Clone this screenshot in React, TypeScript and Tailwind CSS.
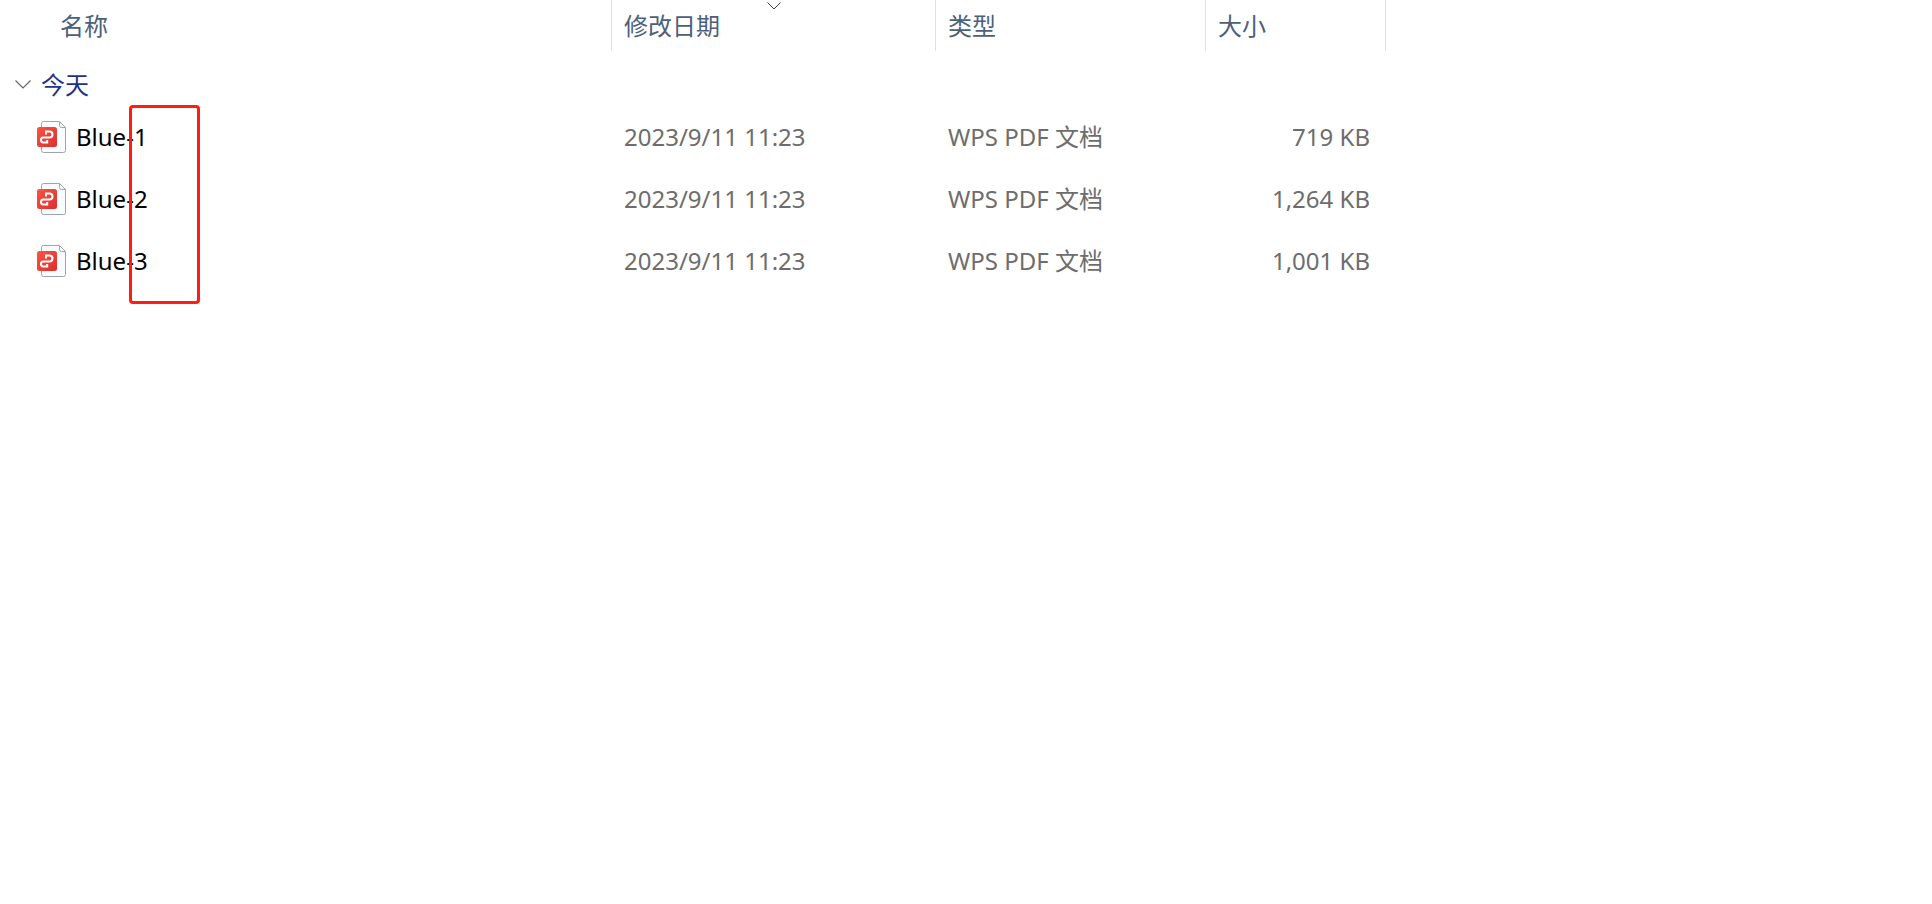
import { useState } from 'react';

interface FileEntry {
    name: string;
    modified: string;
    type: string;
    size: string;
}

const FILES: FileEntry[] = [
    { name: 'Blue-1', modified: '2023/9/11 11:23', type: 'WPS PDF 文档', size: '719 KB' },
    { name: 'Blue-2', modified: '2023/9/11 11:23', type: 'WPS PDF 文档', size: '1,264 KB' },
    { name: 'Blue-3', modified: '2023/9/11 11:23', type: 'WPS PDF 文档', size: '1,001 KB' },
];

function PdfIcon() {
    return (
        <svg width="29" height="32" viewBox="0 0 29 32" fill="none" aria-hidden="true" className="shrink-0">
            <defs>
                <linearGradient id="pdf-badge" x1="0" y1="6" x2="20" y2="26" gradientUnits="userSpaceOnUse">
                    <stop stopColor="#fb5443" />
                    <stop offset="1" stopColor="#dc2f2f" />
                </linearGradient>
            </defs>
            <path
                d="M6.5 .5H22.5L28.5 6.5V29.5Q28.5 31.5 26.5 31.5H6.5Q4.5 31.5 4.5 29.5V2.5Q4.5 .5 6.5 .5Z"
                fill="#fafdff"
                stroke="#9ca3b1"
            />
            <path d="M22.5 .5V4.5Q22.5 6.5 24.5 6.5H28.5" stroke="#9ca3b1" />
            <rect y="6" width="20" height="20" rx="2.5" fill="url(#pdf-badge)" />
            <path
                d="M9 13.6V10.4H12.4A3.1 3.1 0 0 1 12.4 16.6H6.4A2.4 2.4 0 0 0 6.4 21.5H10.2V19"
                stroke="#fff"
                strokeWidth="2"
            />
        </svg>
    );
}

export default function App() {
    const [open, setOpen] = useState(true);

    return (
        <main className="relative min-h-screen overflow-x-auto bg-white font-['Noto_Sans','Noto_Sans_CJK_SC',sans-serif] text-2xl text-[#6d6d6d]">
            <table className="w-full table-fixed border-separate border-spacing-0">
                <colgroup>
                    <col className="w-[612px]" />
                    <col className="w-[324px]" />
                    <col className="w-[270px]" />
                    <col className="w-[180px]" />
                    <col />
                </colgroup>
                <thead>
                    <tr className="h-[51px] text-left text-[#4c607a]">
                        <th scope="col" className="border-r border-[#e0e0e0] pl-[60px] font-normal">
                            <button type="button">名称</button>
                        </th>
                        <th scope="col" aria-sort="descending" className="relative border-r border-[#e0e0e0] pl-3 font-normal">
                            <svg
                                width="14"
                                height="8"
                                viewBox="0 0 14 8"
                                fill="none"
                                stroke="#444"
                                aria-hidden="true"
                                className="absolute top-0.5 left-1/2 -translate-x-1/2"
                            >
                                <path d="M.5 .5L7 7L13.5 .5" />
                            </svg>
                            <button type="button">修改日期</button>
                        </th>
                        <th scope="col" className="border-r border-[#e0e0e0] pl-3 font-normal">
                            <button type="button">类型</button>
                        </th>
                        <th scope="col" className="border-r border-[#e0e0e0] pl-3 font-normal">
                            <button type="button">大小</button>
                        </th>
                        <td />
                    </tr>
                </thead>
                <tbody>
                    <tr className="h-[55px]">
                        <th scope="rowgroup" colSpan={5} className="pt-3 pl-[15px] text-left font-normal text-[#1e3287]">
                            <button
                                type="button"
                                aria-expanded={open}
                                onClick={() => setOpen(!open)}
                                className="flex items-center gap-2.5"
                            >
                                <svg width="16" height="9" viewBox="0 0 16 9" fill="none" stroke="#666" aria-hidden="true">
                                    <path d="M.5 .5L8 8L15.5 .5" strokeWidth="1.2" />
                                </svg>
                                今天
                            </button>
                        </th>
                    </tr>
                    {open &&
                        FILES.map((file) => (
                            <tr key={file.name} className="h-[62px]">
                                <td className="pl-[37px] text-black">
                                    <div className="flex items-center gap-2.5">
                                        <PdfIcon />
                                        {file.name}
                                    </div>
                                </td>
                                <td className="pl-3">{file.modified}</td>
                                <td className="pl-3">{file.type}</td>
                                <td className="pr-4 text-right">{file.size}</td>
                                <td />
                            </tr>
                        ))}
                </tbody>
            </table>

            {/* highlight over the numbered suffixes */}
            <div className="pointer-events-none absolute top-[105px] left-[129px] h-[199px] w-[71px] rounded-sm border-3 border-[#ff1d12]" />
        </main>
    );
}
